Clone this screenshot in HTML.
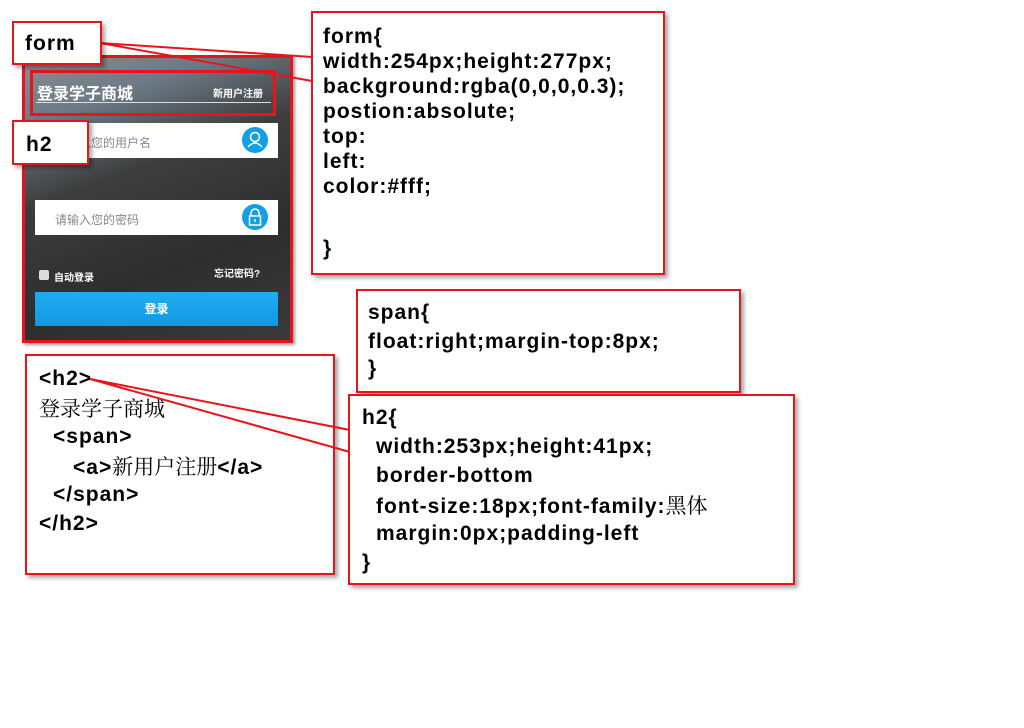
<!DOCTYPE html>
<html><head><meta charset="utf-8"><style>
body{margin:0;width:1024px;height:728px;background:#fff;position:relative;overflow:hidden;font-family:"Liberation Sans","Noto Sans CJK SC",sans-serif}
.b{position:absolute;background:#fff;border:2px solid #e8141b;box-sizing:border-box;box-shadow:3px 3px 4px rgba(0,0,0,.35);font-weight:bold;color:#000;font-size:21px;letter-spacing:1px}
.t{position:absolute;white-space:nowrap;line-height:24px}
.c{font-weight:normal;font-family:"Noto Serif CJK SC","Liberation Serif",serif;letter-spacing:0;font-size:21px}
#form{position:absolute;left:22px;top:55px;width:271px;height:288px;border:3px solid #e8141b;box-sizing:border-box;background:linear-gradient(160deg,#8a8d91 0%,#6c7a86 18%,#3d3d3d 40%,#2e2e2e 70%,#3a3a3a 100%);box-shadow:2px 2px 3px rgba(0,0,0,.4);overflow:hidden}
#form .t{line-height:normal;letter-spacing:0}
.in{position:absolute;left:10px;width:243px;height:35px;background:#fff;color:#888;font-size:12px}
.ic{position:absolute;right:10px;top:4px;width:26px;height:26px;border-radius:50%;background:#139fe6}
</style></head><body>
<div id="form">
  <div style="position:absolute;left:5px;top:12px;width:246px;height:46px;border:3px solid #e8141b;box-sizing:border-box"></div>
  <div class="t" style="left:12px;top:22px;color:#fff;font-size:16px;font-weight:bold">登录学子商城</div>
  <div class="t" style="left:188px;top:27px;color:#fff;font-size:10px;font-weight:bold">新用户注册</div>
  <div style="position:absolute;left:11px;top:44px;width:235px;height:1px;background:#ddd"></div>
  <div class="in" style="top:65px"><span class="t" style="left:20px;top:11px">请输入您的用户名</span><div class="ic"><svg width="26" height="26"><circle cx="13" cy="10" r="4.5" fill="none" stroke="#fff" stroke-width="1.5"/><path d="M6 20 Q13 12 20 20" fill="none" stroke="#fff" stroke-width="1.5"/></svg></div></div>
  <div class="in" style="top:142px"><span class="t" style="left:20px;top:11px">请输入您的密码</span><div class="ic"><svg width="26" height="26"><path d="M9 12 V9 a4 4 0 0 1 8 0 V12" fill="none" stroke="#fff" stroke-width="1.5"/><rect x="7.5" y="12" width="11" height="9" fill="none" stroke="#fff" stroke-width="1.5"/><rect x="12.3" y="15" width="1.4" height="3" fill="#fff"/></svg></div></div>
  <div style="position:absolute;left:14px;top:212px;width:10px;height:10px;background:#ddd;border-radius:2px"></div>
  <div class="t" style="left:29px;top:211px;color:#fff;font-size:10px;font-weight:bold">自动登录</div>
  <div class="t" style="left:189px;top:207px;color:#fff;font-size:10px;font-weight:bold">忘记密码?</div>
  <div style="position:absolute;left:10px;top:234px;width:243px;height:34px;background:linear-gradient(#1fadf0,#1398e4);color:#fff;font-size:12px;font-weight:bold;text-align:center;line-height:34px">登录</div>
</div>
<div class="b" style="left:25px;top:354px;width:310px;height:221px">
  <div class="t" style="left:12px;top:11px">&lt;h2&gt;</div>
  <div class="t c" style="left:12px;top:40px">登录学子商城</div>
  <div class="t" style="left:26px;top:69px">&lt;span&gt;</div>
  <div class="t" style="left:46px;top:98px">&lt;a&gt;<span class="c">新用户注册</span>&lt;/a&gt;</div>
  <div class="t" style="left:26px;top:127px">&lt;/span&gt;</div>
  <div class="t" style="left:12px;top:156px">&lt;/h2&gt;</div>
</div>
<svg style="position:absolute;left:0;top:0" width="1024" height="728">
  <path d="M100 43 L312 57 M100 43 L312 81" stroke="#e8141b" stroke-width="2" fill="none"/>
  <path d="M90 379 L350 430 M90 379 L350 452" stroke="#e8141b" stroke-width="2" fill="none"/>
</svg>
<div class="b" style="left:12px;top:21px;width:90px;height:44px"><div class="t" style="left:11px;top:9px">form</div></div>
<div class="b" style="left:12px;top:120px;width:77px;height:45px"><div class="t" style="left:12px;top:11px">h2</div></div>
<div class="b" style="left:311px;top:11px;width:354px;height:264px">
  <div class="t" style="left:10px;top:12px">form{</div>
  <div class="t" style="left:10px;top:37px">width:254px;height:277px;</div>
  <div class="t" style="left:10px;top:62px">background:rgba(0,0,0,0.3);</div>
  <div class="t" style="left:10px;top:87px">postion:absolute;</div>
  <div class="t" style="left:10px;top:112px">top:</div>
  <div class="t" style="left:10px;top:137px">left:</div>
  <div class="t" style="left:10px;top:162px">color:#fff;</div>
  <div class="t" style="left:10px;top:224px">}</div>
</div>
<div class="b" style="left:356px;top:289px;width:385px;height:104px">
  <div class="t" style="left:10px;top:10px">span{</div>
  <div class="t" style="left:10px;top:39px">float:right;margin-top:8px;</div>
  <div class="t" style="left:10px;top:66px">}</div>
</div>
<div class="b" style="left:348px;top:394px;width:447px;height:191px">
  <div class="t" style="left:12px;top:10px">h2{</div>
  <div class="t" style="left:26px;top:39px">width:253px;height:41px;</div>
  <div class="t" style="left:26px;top:68px">border-bottom</div>
  <div class="t" style="left:26px;top:97px">font-size:18px;font-family:<span class="c">黑体</span></div>
  <div class="t" style="left:26px;top:126px">margin:0px;padding-left</div>
  <div class="t" style="left:12px;top:155px">}</div>
</div>
</body></html>
